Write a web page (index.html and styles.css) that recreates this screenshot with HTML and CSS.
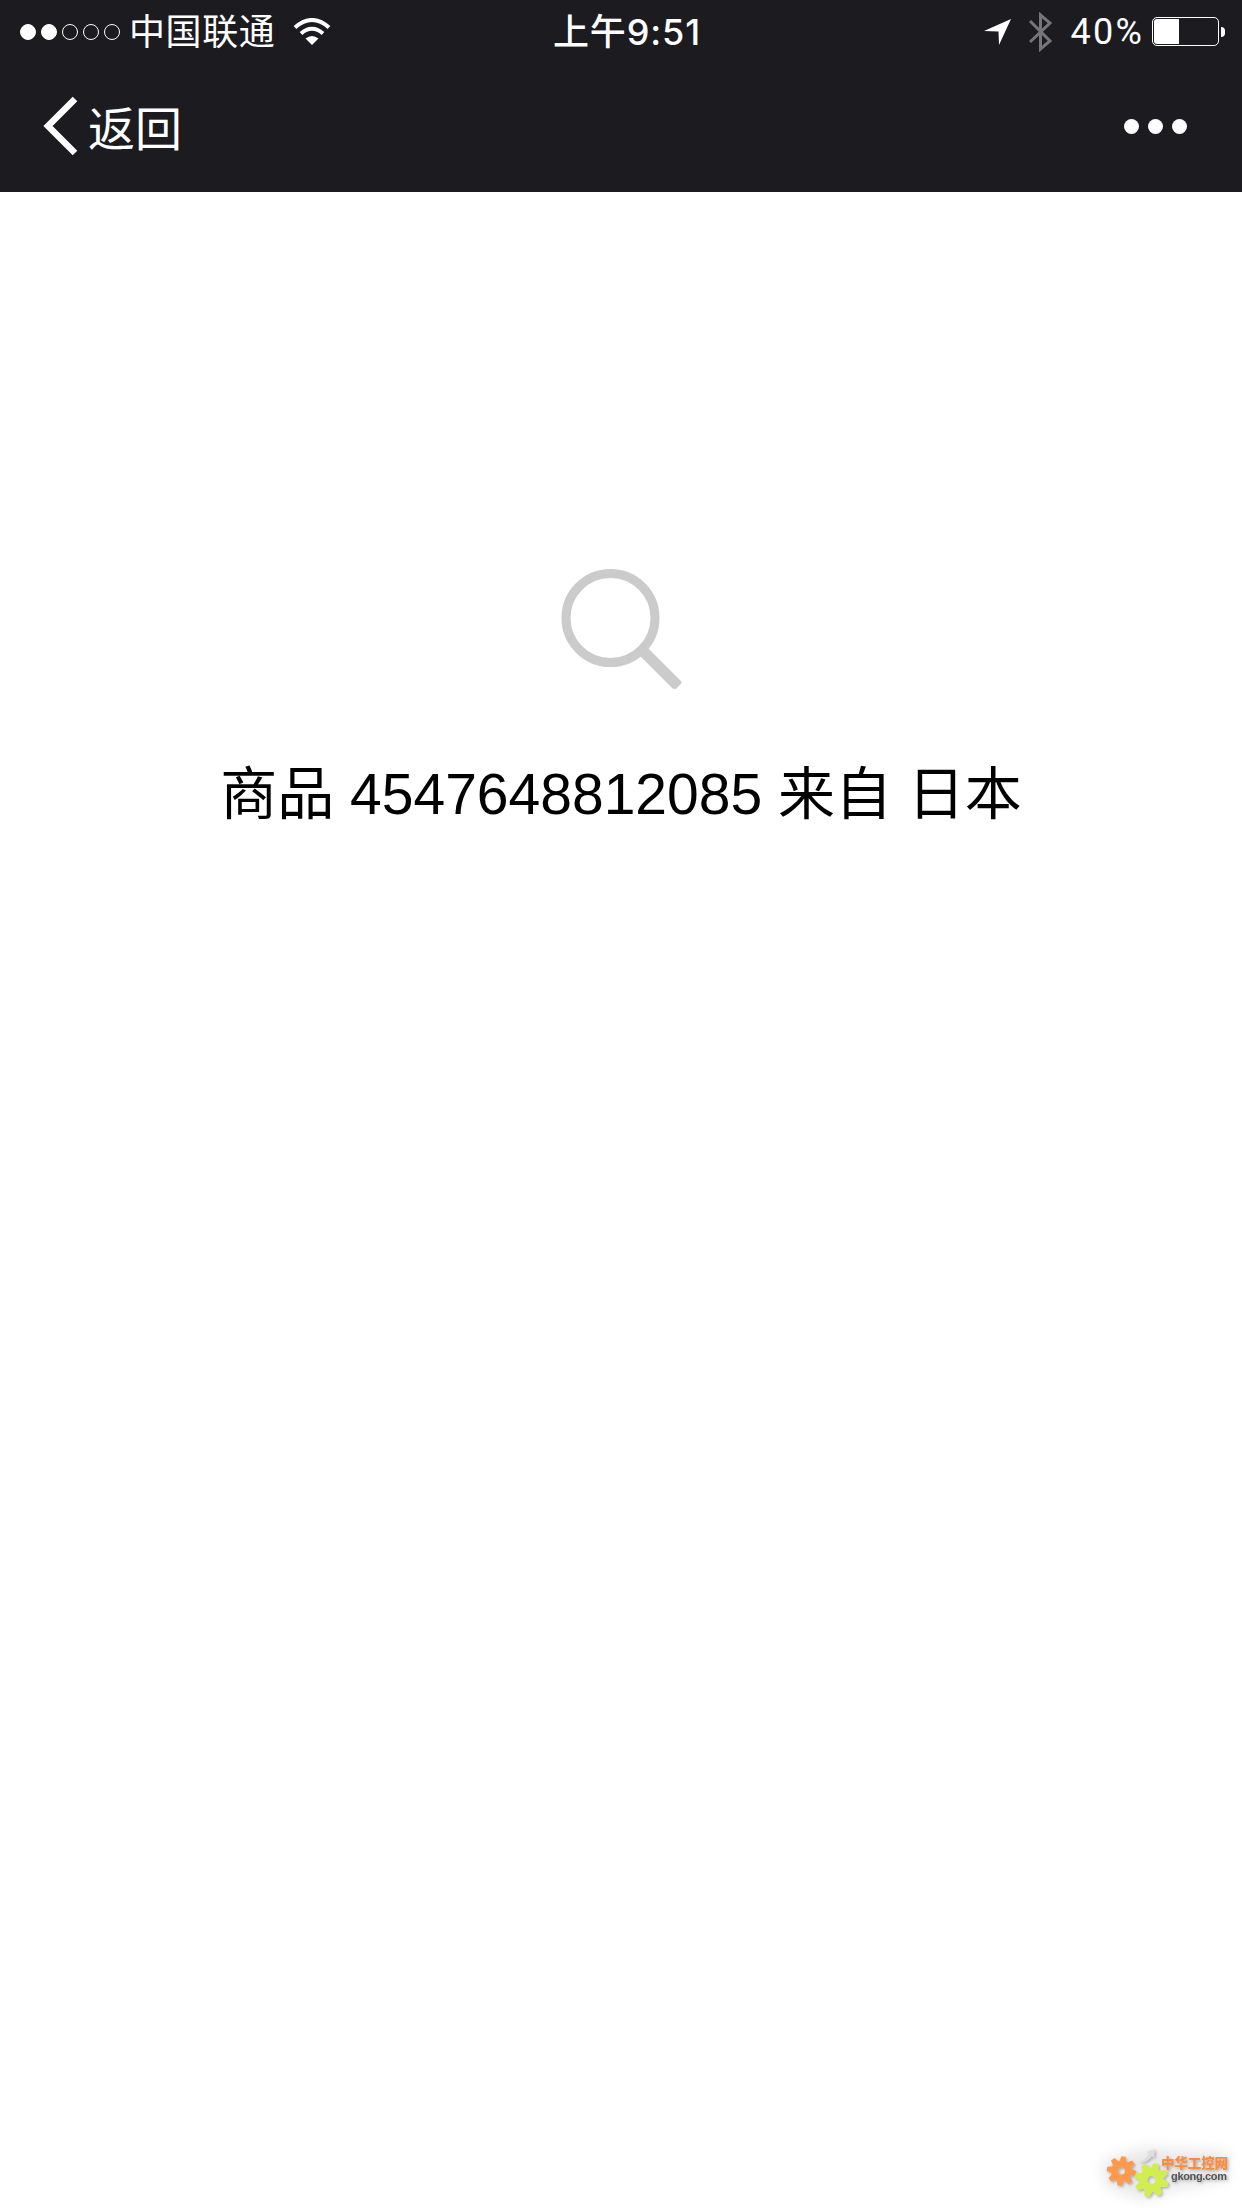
FILE: index.html
```html
<!DOCTYPE html>
<html lang="zh-CN">
<head>
    <meta charset="UTF-8">
    <meta name="viewport" content="width=device-width, initial-scale=1.0">
    <title>商品来源</title>
    <link rel="stylesheet" href="styles.css">
</head>
<body>
    <header>
        <div class="status-bar">
            <div class="status-left">
                <div class="signal">
                    <span class="dot full"></span>
                    <span class="dot full"></span>
                    <span class="dot"></span>
                    <span class="dot"></span>
                    <span class="dot"></span>
                </div>
                <span class="carrier">中国联通</span>
                <svg class="wifi" width="38" height="28" viewBox="0 0 38 28">
                    <path d="M2 9.5 Q19 -5.5 36 9.5" fill="none" stroke="#fff" stroke-width="4"/>
                    <path d="M8 15.5 Q19 6 30 15.5" fill="none" stroke="#fff" stroke-width="4"/>
                    <path d="M12.5 20.5 Q19 15.5 25.5 20.5 L19 27 Z" fill="#fff"/>
                </svg>
            </div>
            <div class="time">上午9:51</div>
            <div class="status-right">
                <svg class="location" width="28" height="28" viewBox="0 0 28 28">
                    <path d="M27 1 L0 13 L14.5 13.5 L15 27 Z" fill="#fff"/>
                </svg>
                <svg class="bluetooth" width="24" height="42" viewBox="0 0 24 42">
                    <path d="M1 10 L21 30 L11.5 38 V4 L21 12 L1 31" fill="none" stroke="#76767a" stroke-width="3"/>
                </svg>
                <span class="percent">40%</span>
                <div class="battery"><div class="level"></div></div>
                <div class="battery-tip"></div>
            </div>
        </div>
        <div class="nav-bar">
            <div class="back">
                <svg width="36" height="60" viewBox="0 0 36 60">
                    <path d="M33 3 L6 30 L33 57" fill="none" stroke="#fff" stroke-width="6.500"/>
                </svg>
                <span>返回</span>
            </div>
            <div class="more">
                <span></span>
                <span></span>
                <span></span>
            </div>
        </div>
    </header>

    <main>
        <svg class="search-icon" width="124" height="124" viewBox="0 0 124 124">
            <circle cx="51.5" cy="50" r="44.5" fill="none" stroke="#cbcbcb" stroke-width="9"/>
            <path d="M85 84 L118 117" stroke="#cbcbcb" stroke-width="11"/>
            <path d="M116 119 L120.5 114.5" stroke="#cbcbcb" stroke-width="4" stroke-linecap="round"/>
        </svg>
        <p>商品 4547648812085 来自 日本</p>
    </main>

    <!-- site logo -->
    <svg class="logo" width="160" height="80" viewBox="0 0 160 80">
        <defs>
            <filter id="glow" x="-30%" y="-50%" width="160%" height="200%">
                <feGaussianBlur stdDeviation="7"/>
            </filter>
            <filter id="shadow" x="-20%" y="-20%" width="150%" height="150%">
                <feDropShadow dx="1.5" dy="1.5" stdDeviation="1" flood-color="#777" flood-opacity="0.5"/>
            </filter>
            <g id="gear">
                <circle r="8" fill="none" stroke-width="8"/>
                <g stroke="none">
                    <path id="tooth" d="M-4 -11 L-2.5 -17 H2.5 L4 -11 Z"/>
                    <use href="#tooth" transform="rotate(45)"/>
                    <use href="#tooth" transform="rotate(90)"/>
                    <use href="#tooth" transform="rotate(135)"/>
                    <use href="#tooth" transform="rotate(180)"/>
                    <use href="#tooth" transform="rotate(225)"/>
                    <use href="#tooth" transform="rotate(270)"/>
                    <use href="#tooth" transform="rotate(315)"/>
                </g>
            </g>
        </defs>
        <path d="M20 34 L60 20 L145 24 V52 L90 62 L60 72 L24 58 Z" fill="#dadada" opacity="0.6" filter="url(#glow)"/>
        <g filter="url(#shadow)">
            <path d="M56 34 Q63 32 67 26 L64.5 24 L73 21 L72 30 L70 28 Q64 36 56 34 Z" fill="#dedede"/>
            <use href="#gear" transform="translate(39.5 43) rotate(8) scale(0.86)" fill="#ff9a4d" stroke="#ff9a4d"/>
            <use href="#gear" transform="translate(69.5 52) rotate(16)" fill="#d2ed50" stroke="#d2ed50"/>
            <text class="logo-cn" x="79" y="39.5" textLength="67">中华工控网</text>
            <text class="logo-en" x="89" y="51.5" textLength="56">gkong.com</text>
        </g>
    </svg>
</body>
</html>
```

FILE: styles.css
```css
body {
    margin: 0;
    min-height: 2208px;
    background-color: #fff;
    color: #000;
    font-family: "Liberation Sans", "Noto Sans CJK SC", sans-serif;
    position: relative;
}
header {
    height: 192px;
    background-color: #1c1b20;
    color: #fff;
}
.status-bar {
    height: 61px;
    display: grid;
    grid-template-columns: 1fr auto 1fr;
    align-items: center;
    padding: 0 17px 0 20px;
    font-family: Inter, "Noto Sans CJK SC", sans-serif;
    font-size: 36px;
    line-height: 61px;
}
.status-left,
.status-right {
    display: flex;
    align-items: center;
    height: 61px;
}
.status-right {
    justify-content: flex-end;
}
.signal {
    display: flex;
    gap: 5px;
}
.dot {
    box-sizing: border-box;
    width: 16px;
    height: 16px;
    border: 1px solid #fff;
    border-radius: 50%;
}
.dot.full {
    background-color: #fff;
}
.carrier {
    margin-left: 9px;
    padding-top: 2px;
    letter-spacing: 0.6px;
}
.wifi {
    margin-left: 18px;
}
.time {
    font-weight: 500;
    letter-spacing: 0.9px;
    margin-left: 9px;
    padding-top: 2px;
}
.location {
    margin-right: 17px;
}
.bluetooth {
    margin-right: 18px;
}
.percent {
    font-family: Roboto, sans-serif;
    letter-spacing: 2.2px;
    margin-right: 8px;
    padding-top: 1px;
}
.battery {
    box-sizing: border-box;
    width: 67px;
    height: 29px;
    border: 1px solid #fff;
    border-radius: 5px;
    padding: 1px;
}
.level {
    width: 40%;
    height: 100%;
    background-color: #fff;
    border-radius: 3px 0 0 3px;
}
.battery-tip {
    width: 4px;
    height: 10px;
    margin-left: 2px;
    background-color: #fff;
    border-radius: 0 5px 5px 0;
}
.nav-bar {
    height: 131px;
    display: flex;
    align-items: flex-start;
    justify-content: space-between;
    padding: 0 55px 0 42px;
}
.back {
    display: flex;
    align-items: center;
    gap: 10px;
    margin-top: 35px;
    height: 60px;
    font-size: 47px;
}
.back span {
    margin-top: -2px;
}
.more {
    display: flex;
    gap: 9px;
    margin-top: 58px;
}
.more span {
    width: 15px;
    height: 15px;
    background-color: #fff;
    border-radius: 50%;
}
main {
    display: flex;
    flex-direction: column;
    align-items: center;
    padding-top: 376px;
}
main p {
    margin: 60px 0 0;
    font-size: 57px;
    line-height: 84px;
    white-space: nowrap;
}
.logo {
    position: absolute;
    right: 0;
    bottom: 0;
}
.logo-cn {
    font-family: "Noto Sans CJK SC", sans-serif;
    font-size: 13.5px;
    font-weight: 900;
    fill: #ff8c3a;
}
.logo-en {
    font-family: "Liberation Sans", sans-serif;
    font-size: 11px;
    font-weight: bold;
    fill: #555;
}
```
